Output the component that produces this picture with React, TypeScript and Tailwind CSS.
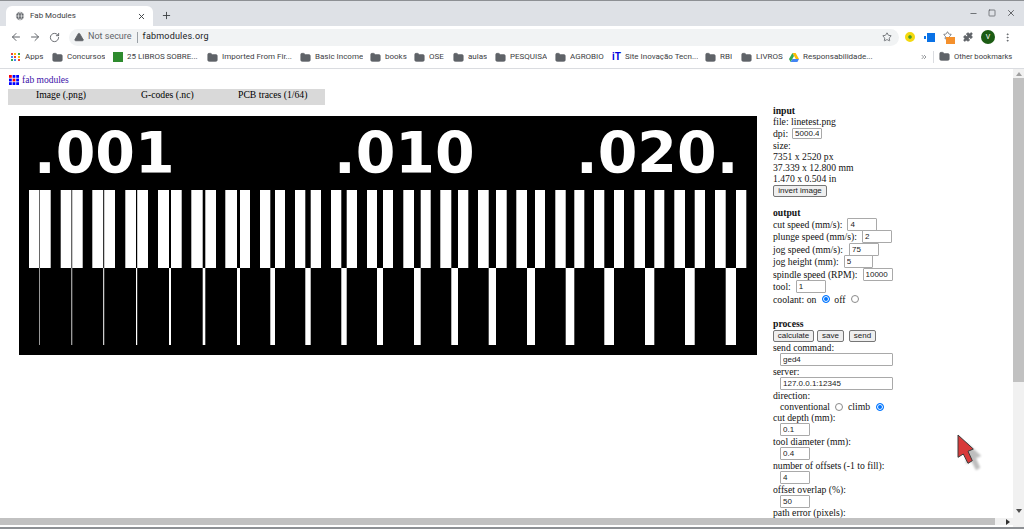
import React from "react";
import { ArrowLeft, ArrowRight, RotateCw, Star, Puzzle, Folder, Globe, X, Plus, Minus, Square, MoreVertical, TriangleAlert, ChevronsRight } from "lucide-react";

// [x, width, gapX, gapWidth] of each test bar
const bars = [
  [29, 21.7, 39, 0.6],
  [60.7, 22, 71.4, 0.8],
  [92.3, 22.7, 103.2, 1],
  [125.3, 22.7, 136, 1.2],
  [158, 23.7, 169, 2],
  [191.3, 24.7, 202.7, 2.6],
  [225.3, 24.7, 237, 3],
  [260, 25, 270.3, 4.7],
  [295, 26, 305.3, 5.4],
  [331, 26, 341.3, 5.4],
  [367, 26, 377, 6],
  [403.3, 27.4, 414, 6.7],
  [440.3, 28, 451.3, 6.7],
  [478, 28.7, 488.7, 7.3],
  [516.3, 28.7, 527, 8],
  [555.3, 29, 565.7, 8.6],
  [594, 30, 604.3, 9.7],
  [634.3, 30, 645, 9.3],
  [674.3, 30.7, 685, 9.7],
  [715, 31.3, 725.7, 10.3],
];

const Bookmark = ({ label, w }: { label: string; w?: string }) => (
  <div className={`flex items-center gap-[4px] shrink-0 ${w ?? ""}`}>
    <Folder size={11} fill="#5f6368" stroke="#5f6368" className="shrink-0" />
    <span className="truncate">{label}</span>
  </div>
);

const Field = ({ value, w }: { value: string; w: string }) => (
  <input
    readOnly
    value={value}
    className={`${w} h-[13px] border border-[#a9a9a9] rounded-[1px] bg-white px-[2px] text-[8px] text-[#222] font-['Liberation_Sans',sans-serif] outline-none`}
  />
);

const Btn = ({ label, w }: { label: string; w: string }) => (
  <button className={`${w} h-[12px] border border-[#767676] rounded-[2px] bg-[#efefef] text-[8px] leading-[10px] text-[#222] font-['Liberation_Sans',sans-serif] shrink-0`}>
    {label}
  </button>
);

const Radio = ({ on, className }: { on?: boolean; className?: string }) => (
  <span className={`inline-block w-[8px] h-[8px] rounded-full shrink-0 ${className ?? ""} ${on ? "border border-[#0075ff] bg-[#0075ff] shadow-[inset_0_0_0_1px_white]" : "border border-[#8a8a8a] bg-white"}`} />
);

const Row = ({ children, h = "h-[12.5px]" }: { children: React.ReactNode; h?: string }) => (
  <div className={`flex items-center whitespace-nowrap ${h}`}>{children}</div>
);

export default function App() {
  return (
    <div className="w-[1024px] h-[529px] overflow-hidden flex flex-col bg-white font-['Liberation_Serif',serif] text-black">
      {/* title bar */}
      <div className="h-[26px] shrink-0 bg-[#dee1e6] border-t border-[#8d9094] flex items-end pl-[6px]">
        <div className="w-[147px] h-[20px] bg-white rounded-t-[6px] flex items-center pl-[9px] pr-[7px] gap-[5px] text-[#3c4043] font-['Roboto',sans-serif]">
          <Globe size={10} fill="#5f6368" stroke="white" strokeWidth={1.5} className="shrink-0" />
          <span className="flex-1 text-[8px]">Fab Modules</span>
          <X size={9} strokeWidth={2.5} className="text-[#3c4043]" />
        </div>
        <Plus size={11} strokeWidth={2} className="ml-[8px] mb-[5px] text-[#3c4043]" />
        <div className="ml-auto flex items-center gap-[10px] pr-[8px] mb-[8px] text-[#4a4d51]">
          <Minus size={9} strokeWidth={2} />
          <Square size={8} strokeWidth={2} />
          <X size={10} strokeWidth={2} />
        </div>
      </div>

      {/* toolbar */}
      <div className="h-[21px] shrink-0 bg-white flex items-center pt-[1px] pl-[10px] pr-[8px]">
        <ArrowLeft size={12} className="text-[#5f6368] shrink-0" />
        <ArrowRight size={12} className="text-[#5f6368] shrink-0 ml-[7px]" />
        <RotateCw size={11} className="text-[#5f6368] shrink-0 ml-[8px]" />
        <div className="ml-[9px] w-[830px] h-[17px] rounded-full bg-[#f1f3f4] flex items-center pl-[5px] pr-[7px] text-[9px] font-['Roboto',sans-serif]">
          <TriangleAlert size={10} fill="#5f6368" stroke="#5f6368" className="shrink-0" />
          <span className="ml-[4px] text-[#5f6368]">Not secure</span>
          <span className="mx-[5px] w-px h-[11px] bg-[#9aa0a6]" />
          <span className="text-[#202124] tracking-[0.2px]">fabmodules.org</span>
          <Star size={10} strokeWidth={2} className="ml-auto text-[#5f6368]" />
        </div>
        <div className="ml-[6px] flex items-center">
          <span className="w-[10px] h-[10px] rounded-full bg-[#f4d90e] border-[3px] border-[#f4d90e] shadow-[inset_0_0_0_2px_#4a9a2c] shrink-0" />
          <svg width="11" height="9" viewBox="0 0 11 9" className="ml-[9px] shrink-0">
            <rect x="3" y="0" width="8" height="9" fill="#0a72e6" />
            <rect x="0" y="3" width="2" height="3" fill="#0a72e6" />
          </svg>
          <span className="ml-[8px] relative w-[12px] h-[12px] shrink-0">
            <Star size={9} className="text-[#5f6368] absolute left-0 top-0" />
            <span className="absolute left-[3px] top-[6px] w-[9px] h-[7px] bg-[#f4902c]" />
          </span>
          <Puzzle size={10} fill="#5f6368" stroke="#5f6368" className="ml-[8px] shrink-0" />
          <span className="ml-[8px] w-[14px] h-[14px] rounded-full bg-[#1c5c14] text-white text-[7px] leading-[14px] text-center font-['Roboto',sans-serif] shrink-0">V</span>
          <MoreVertical size={11} className="ml-[7px] text-[#5f6368] shrink-0" />
        </div>
      </div>

      {/* bookmarks */}
      <div className="h-[22px] shrink-0 bg-white border-b border-[#dadce0] flex items-center pb-[1px] pl-[11px] pr-[8px] text-[8px] text-[#3c4043] font-['Roboto',sans-serif]">
        <div className="flex items-center gap-[5px] w-[41px] shrink-0">
          <span className="grid grid-cols-3 gap-px w-[9px] shrink-0">
            {["#ea4335", "#fbbc05", "#34a853", "#4285f4", "#ea4335", "#fbbc05", "#34a853", "#4285f4", "#ea4335"].map((c, i) => (
              <span key={i} className="w-[2px] h-[2px]" style={{ background: c }} />
            ))}
          </span>
          <span>Apps</span>
        </div>
        <Bookmark label="Concursos" w="w-[61px]" />
        <div className="flex items-center gap-[4px] w-[94px] shrink-0">
          <span className="w-[10px] h-[10px] bg-[#2e8b2e] shrink-0" />
          <span className="truncate">25 LIBROS SOBRE...</span>
        </div>
        <Bookmark label="Imported From Fir..." w="w-[93px]" />
        <Bookmark label="Basic Income" w="w-[70px]" />
        <Bookmark label="books" w="w-[44px]" />
        <Bookmark label="OSE" w="w-[39px]" />
        <Bookmark label="aulas" w="w-[42px]" />
        <Bookmark label="PESQUISA" w="w-[60px]" />
        <Bookmark label="AGROBIO" w="w-[57px]" />
        <div className="flex items-center gap-[4px] w-[93px] shrink-0">
          <span className="w-[9px] text-[10px] font-bold text-[#0000e0] leading-[10px] shrink-0">iT</span>
          <span className="truncate">Site Inovação Tecn...</span>
        </div>
        <Bookmark label="RBI" w="w-[36px]" />
        <Bookmark label="LIVROS" w="w-[48px]" />
        <div className="flex items-center gap-[4px] w-[131px] shrink-0">
          <svg width="10" height="9" viewBox="0 0 10 9" className="shrink-0">
            <path d="M3.400 0h3.200L10 6H6.800z" fill="#fbbc05" />
            <path d="M3.400 0L0 6l1.600 3 3.400-6z" fill="#34a853" />
            <path d="M1.600 9h6.800L10 6H3.400z" fill="#4285f4" />
          </svg>
          <span className="truncate">Responsabilidade...</span>
        </div>
        <ChevronsRight size={8} className="text-[#5f6368] shrink-0" />
        <span className="ml-[5px] w-px h-[12px] bg-[#dadce0] shrink-0" />
        <div className="ml-[5px] flex items-center gap-[4px] shrink-0">
          <Folder size={11} fill="#5f6368" stroke="#5f6368" />
          <span className="text-[7.6px]">Other bookmarks</span>
        </div>
      </div>

      {/* page */}
      <div className="flex-1 min-h-0 flex relative overflow-hidden">
        <div className="flex-1 min-w-0 flex flex-col">
          <div className="flex-1 min-h-0 flex overflow-hidden">
            <div className="w-[773px] shrink-0">
              <div className="flex items-center gap-[3px] pl-[9px] pt-[2px] h-[20px] text-[9.5px] text-[#3a10a8]">
                <svg width="10" height="10" viewBox="0 0 10 10" className="shrink-0">
                  {[0, 1, 2].flatMap((r) =>
                    [0, 1, 2].map((c) => (
                      <rect key={`${r}${c}`} x={c * 3.6} y={r * 3.6} width="2.8" height="2.8" fill={r === c && r < 2 ? "#f00" : "#00f"} />
                    ))
                  )}
                </svg>
                <span>fab modules</span>
              </div>
              <div className="ml-[8px] w-[317px] h-[16px] bg-[#d9d9d9] text-[9.7px] leading-[10px]">
                <div className="flex pl-[28px] pt-[1px]">
                  <span className="w-[105px]">Image (.png)</span>
                  <span className="w-[97px]">G-codes (.nc)</span>
                  <span>PCB traces (1/64)</span>
                </div>
              </div>
              <svg width="738" height="239" viewBox="19 116 738 239" className="ml-[19px] mt-[11px] block">
                <rect x="19" y="116" width="738" height="239" fill="#000" />
                <g fill="#fff" fontFamily="'DejaVu Sans', sans-serif" fontWeight="700" fontSize="57">
                  <text x="34" y="173">.001</text>
                  <text x="334" y="173">.010</text>
                  <text x="576" y="173">.020.</text>
                </g>
                {bars.map(([x, w, gx, gw], i) => (
                  <g key={i}>
                    <rect x={x} y="190" width={w} height="78" fill="#fff" />
                    <rect x={gx} y="190" width={gw} height="78" fill="#000" />
                    <rect x={gx} y="268" width={gw} height="77" fill="#fff" />
                  </g>
                ))}
              </svg>
            </div>

            {/* control panel */}
            <div className="flex-1 min-w-0 text-[9.7px] leading-[11px] pt-[36px] text-[#111]">
              <div className="font-bold h-[11px]">input</div>
              <Row h="h-[11px]">file: linetest.png</Row>
              <Row h="h-[13px]">dpi:<Field value="5000.4" w="w-[30px] ml-[4px] !h-[11px]" /></Row>
              <Row h="h-[11px]">size:</Row>
              <Row h="h-[11px]">7351 x 2520 px</Row>
              <Row h="h-[11px]">37.339 x 12.800 mm</Row>
              <Row h="h-[10px]">1.470 x 0.504 in</Row>
              <div className="h-[13px] pt-px"><Btn label="invert image" w="w-[54px]" /></div>

              <div className="font-bold h-[11px] mt-[11px]">output</div>
              <Row>cut speed (mm/s):<Field value="4" w="w-[30px] ml-[5px]" /></Row>
              <Row>plunge speed (mm/s):<Field value="2" w="w-[30px] ml-[5px]" /></Row>
              <Row>jog speed (mm/s):<Field value="75" w="w-[30px] ml-[6px]" /></Row>
              <Row>jog height (mm):<Field value="5" w="w-[29px] ml-[5px]" /></Row>
              <Row>spindle speed (RPM):<Field value="10000" w="w-[30px] ml-[5px]" /></Row>
              <Row>tool:<Field value="1" w="w-[30px] ml-[5px]" /></Row>
              <Row>coolant: on<Radio on className="ml-[6px]" /><span className="ml-[4px]">off</span><Radio className="ml-[6px]" /></Row>

              <div className="font-bold h-[11px] mt-[12px]">process</div>
              <div className="flex h-[13px] pt-px">
                <Btn label="calculate" w="w-[41px]" />
                <Btn label="save" w="w-[27px] ml-[3px]" />
                <Btn label="send" w="w-[27px] ml-[5px]" />
              </div>
              <Row h="h-[11px]">send command:</Row>
              <div className="pl-[7px] h-[13px]"><Field value="ged4" w="w-[113px]" /></div>
              <Row h="h-[11px]">server:</Row>
              <div className="pl-[7px] h-[13px]"><Field value="127.0.0.1:12345" w="w-[113px]" /></div>
              <Row h="h-[11px]">direction:</Row>
              <Row h="h-[12px]"><span className="pl-[7px]">conventional</span><Radio className="ml-[5px]" /><span className="ml-[5px]">climb</span><Radio on className="ml-[6px]" /></Row>
              <Row h="h-[10px]">cut depth (mm):</Row>
              <div className="pl-[7px] h-[13px]"><Field value="0.1" w="w-[30px]" /></div>
              <Row h="h-[11px]">tool diameter (mm):</Row>
              <div className="pl-[7px] h-[13px]"><Field value="0.4" w="w-[30px]" /></div>
              <Row h="h-[11px]">number of offsets (-1 to fill):</Row>
              <div className="pl-[7px] h-[13px]"><Field value="4" w="w-[30px]" /></div>
              <Row h="h-[11px]">offset overlap (%):</Row>
              <div className="pl-[7px] h-[12px]"><Field value="50" w="w-[30px]" /></div>
              <Row h="h-[11px]">path error (pixels):</Row>
            </div>
          </div>

          {/* horizontal scrollbar */}
          <div className="h-[7px] shrink-0 bg-[#f1f1f1] flex items-center">
            <div className="w-[995px] h-full bg-[#c1c1c1]" />
            <span className="ml-[11px] w-0 h-0 border-y-[3px] border-y-transparent border-l-[4px] border-l-[#303030]" />
          </div>
          <div className="h-[2px] shrink-0 bg-white" />
        </div>

        {/* vertical scrollbar */}
        <div className="w-[11px] shrink-0 bg-[#f1f1f1] flex flex-col items-center">
          <span className="mt-[3px] w-0 h-0 border-x-[3px] border-x-transparent border-b-[4px] border-b-[#a0a0a0]" />
          <div className="mt-[2px] w-full h-[304px] bg-[#c1c1c1]" />
          <span className="mt-auto mb-[14px] w-0 h-0 border-x-[3px] border-x-transparent border-t-[4px] border-t-[#505050]" />
        </div>

        {/* mouse pointer overlay */}
        <svg width="30" height="40" viewBox="0 0 30 40" className="absolute left-[956px] top-[365px]">
          <defs>
            <filter id="cursor-shadow" x="-30%" y="-30%" width="160%" height="160%">
              <feGaussianBlur stdDeviation="1.2" />
            </filter>
          </defs>
          <path d="M10 8L25.300 22 20 24.300 24.300 33.700 20 36.300 15.300 27 10 30.300z" fill="#000" opacity="0.25" filter="url(#cursor-shadow)" />
          <path d="M2 1L17.300 15 12 17.300 16.300 26.700 12 29.300 7.300 20 2 23.300z" fill="#d83a3a" stroke="#3a3a3a" strokeWidth="1" />
        </svg>
      </div>
      <div className="h-[2px] shrink-0 bg-[#8d9094]" />
    </div>
  );
}
